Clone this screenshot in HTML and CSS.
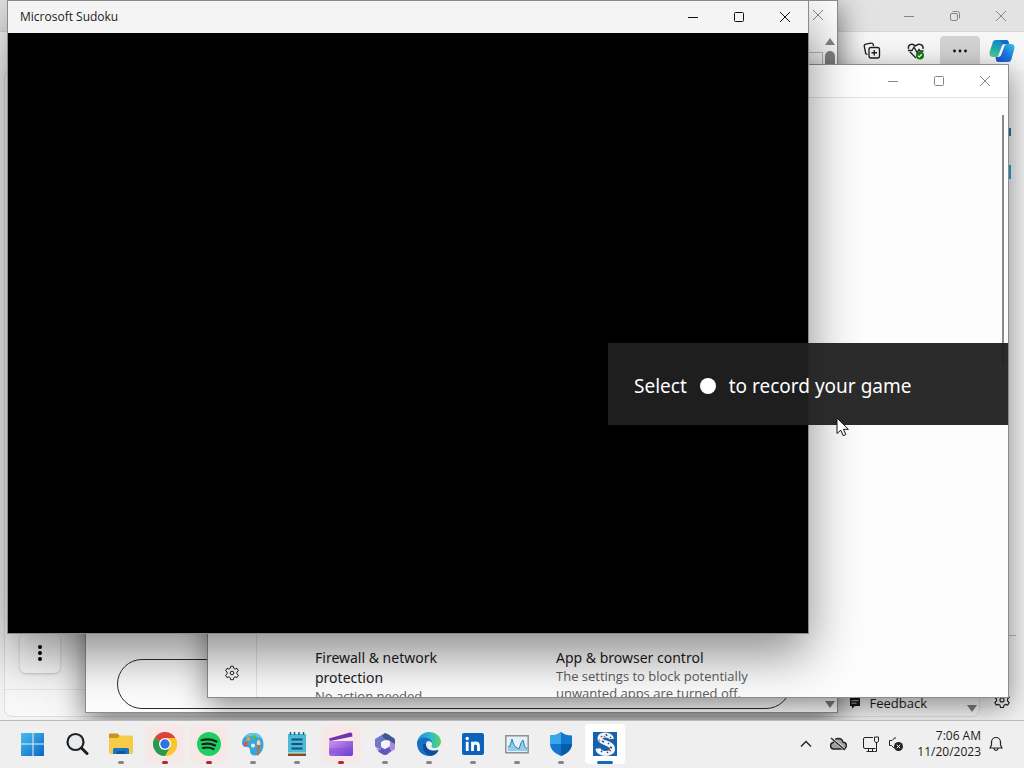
FILE: index.html
```html
<!DOCTYPE html>
<html lang="en">
<head>
<meta charset="utf-8">
<title>Desktop</title>
<link rel="stylesheet" href="styles.css">
</head>
<body>
<div class="desktop">
  <main class="workspace">

    <section class="browser" aria-label="Browser">
      <header class="browser-title">
        <button class="caption" aria-label="Minimize"><svg width="12" height="12" viewBox="0 0 12 12"><path d="M1 6.500h10"/></svg></button>
        <button class="caption" aria-label="Restore"><svg width="12" height="12" viewBox="0 0 12 12"><rect x="1.500" y="3.500" width="7" height="7" rx="1.500"/><path d="M3.500 1.500h5a2 2 0 0 1 2 2v5"/></svg></button>
        <button class="caption" aria-label="Close"><svg width="12" height="12" viewBox="0 0 12 12"><path d="M1 1l10 10M11 1L1 11"/></svg></button>
      </header>
      <div class="browser-tools">
        <button class="tool" aria-label="Collections"><svg width="20" height="20" viewBox="0 0 20 20"><path d="M5.500 13.500l-1-.4A2 2 0 0 1 3.400 11L2.300 5.500a2 2 0 0 1 1.500-2.300L9 2.200a2 2 0 0 1 2.300 1.500l.2 1.300"/><rect x="7" y="6.500" width="10.500" height="10.500" rx="2"/><path d="M12.250 9v5.500M9.500 11.750H15"/></svg></button>
        <button class="tool" aria-label="Browser essentials"><svg width="20" height="20" viewBox="0 0 20 20"><path d="M2.500 8C1.500 4 6 1.500 9.500 5 13 1.500 18 4 17 8M4 11l6 6M2 9.500h4L8 6l3 5.500 2-3 1 1.500h3.500"/><circle cx="14" cy="14.500" r="4" fill="#107c10" stroke="none"/><path d="M12.200 14.700l1.200 1.200 2.400-2.600" stroke="#fff"/></svg></button>
        <button class="tool tool-on" aria-label="Settings and more"><svg width="20" height="20" viewBox="0 0 20 20"><g fill="#111" stroke="none"><circle cx="4.500" cy="10" r="1.400"/><circle cx="10" cy="10" r="1.400"/><circle cx="15.500" cy="10" r="1.400"/></g></svg></button>
        <button class="tool tool-end" aria-label="Copilot"><svg width="26" height="26" viewBox="0 0 26 26" stroke="none">
          <defs>
            <linearGradient id="cp1" x1="0.500" y1="0" x2="0.200" y2="1"><stop offset="0" stop-color="#1583d0"/><stop offset=".5" stop-color="#1fa8b4"/><stop offset="1" stop-color="#55cf8e"/></linearGradient>
            <linearGradient id="cp2" x1="1" y1="0" x2="0" y2="1"><stop offset="0" stop-color="#3cc4ea"/><stop offset=".5" stop-color="#1877dc"/><stop offset="1" stop-color="#1b50cf"/></linearGradient>
          </defs>
          <path d="M7 2h10c2 0 2.500 1.500 3 4h-4c-2 0-3 1-3.500 3l-3 8c-.5 1.500-1 2-3 2H4c-3.500 0-4-3-3-6l2.500-8C4 3 5 2 7 2z" fill="url(#cp1)"/>
          <path d="M19 24H10c-3 0-3-2-3.500-5H9c2 0 3-1 3.500-3l3-8c.5-1.500 1-2 3-2H22c3.500 0 4 3 3 6l-2.500 9c-.5 2-1.500 3-3.500 3z" fill="url(#cp2)"/>
          <path d="M11 2h6c2 0 2.500 1.500 3 4h-4l-3-.5z" fill="#176bc4"/></svg></button>
      </div>
      <div class="browser-body">
        <div class="page">
          <button class="more-button" aria-label="More options"><svg width="6" height="18" viewBox="0 0 6 18"><circle cx="3" cy="3" r="2"/><circle cx="3" cy="9" r="2"/><circle cx="3" cy="15" r="2"/></svg></button>
          <footer class="page-foot">
            <a class="feedback" href="#feedback"><svg width="12" height="12" viewBox="0 0 12 12"><path d="M1 1h10v8H6l-3 2.500V9H1z" fill="#1b1b1b"/><path d="M2.500 3.700h7M2.500 6.200h5" stroke="#bbb"/></svg>Feedback</a>
            <span class="arrow-down page-arrow"></span>
          </footer>
        </div>
        <aside class="rail">
          <div class="rail-top">
            <svg width="18" height="16" viewBox="0 0 18 16"><circle cx="8" cy="6" r="5" fill="none" stroke="#2b88c8" stroke-width="2"/><path d="M12 4h6v8h-6z" fill="#2477a8"/></svg>
            <svg width="18" height="16" viewBox="0 0 18 16"><path d="M1 1h17v14H1z" fill="#33a3d4"/></svg>
          </div>
          <div class="rail-bottom">
            <svg width="14" height="14" viewBox="0 0 14 14"><path d="M1 2h12v9H1z" fill="#111"/></svg>
            <button class="plain" aria-label="Sidebar settings"><svg class="gear" width="18" height="18" viewBox="0 0 16 16"><path d="M6.700 1.300h2.600l.5 2 1.300.7 2-.6 1.300 2.300-1.500 1.400v1.700l1.500 1.500-1.300 2.200-2-.6-1.300.8-.5 2H6.700l-.5-2-1.300-.8-2 .6-1.300-2.200 1.500-1.500V7.100L1.600 5.700l1.300-2.300 2 .6 1.300-.7z"/><circle cx="8" cy="8" r="1.800"/></svg></button>
          </div>
        </aside>
      </div>
    </section>

    <section class="window window-form" aria-label="Form window">
      <header class="titlebar"><button class="caption caption-end" aria-label="Close"><svg width="12" height="12" viewBox="0 0 12 12"><path d="M1 1l10 10M11 1L1 11"/></svg></button></header>
      <div class="form-body">
        <div class="form-content">
          <div class="form-head"></div>
          <input class="pill" type="text" aria-label="Message">
        </div>
        <div class="scrollbar"><span class="arrow-up"></span><span class="thumb"></span><span class="arrow-down"></span></div>
      </div>
    </section>

    <section class="window window-security" aria-label="Security">
      <header class="titlebar">
        <button class="caption" aria-label="Minimize"><svg width="12" height="12" viewBox="0 0 12 12"><path d="M1 6.500h10"/></svg></button>
        <button class="caption" aria-label="Maximize"><svg width="12" height="12" viewBox="0 0 12 12"><rect x="1.500" y="1.500" width="9" height="9" rx="1"/></svg></button>
        <button class="caption" aria-label="Close"><svg width="12" height="12" viewBox="0 0 12 12"><path d="M1 1l10 10M11 1L1 11"/></svg></button>
      </header>
      <div class="security-body">
        <nav class="security-nav"><button class="plain" aria-label="Settings"><svg class="gear" width="16" height="16" viewBox="0 0 16 16"><path d="M6.700 1.300h2.600l.5 2 1.300.7 2-.6 1.300 2.300-1.500 1.400v1.700l1.500 1.500-1.300 2.200-2-.6-1.300.8-.5 2H6.700l-.5-2-1.300-.8-2 .6-1.300-2.200 1.500-1.500V7.100L1.600 5.700l1.300-2.300 2 .6 1.300-.7z"/><circle cx="8" cy="8" r="1.800"/></svg></button></nav>
        <div class="cards">
          <article class="card"><h2>Firewall &amp; network protection</h2><p>No action needed.</p></article>
          <article class="card"><h2>App &amp; browser control</h2><p>The settings to block potentially unwanted apps are turned off.</p></article>
        </div>
        <div class="thin-scroll"></div>
      </div>
    </section>

    <section class="window window-game" aria-label="Microsoft Sudoku">
      <header class="titlebar">
        <h1>Microsoft Sudoku</h1>
        <button class="caption" aria-label="Minimize"><svg width="12" height="12" viewBox="0 0 12 12"><path d="M1 6.500h10"/></svg></button>
        <button class="caption" aria-label="Maximize"><svg width="12" height="12" viewBox="0 0 12 12"><rect x="1.500" y="1.500" width="9" height="9" rx="1"/></svg></button>
        <button class="caption" aria-label="Close"><svg width="12" height="12" viewBox="0 0 12 12"><path d="M1 1l10 10M11 1L1 11"/></svg></button>
      </header>
      <div class="game-canvas"></div>
    </section>

    <div class="toast" role="status"><span>Select</span><span class="record-dot"></span><span>to record your game</span></div>

    <svg class="cursor" width="13" height="20" viewBox="0 0 13 20"><path d="M1 1v15.500l3.800-3.300 2.400 5.500 2.600-1.200-2.400-5.200h5z" fill="#fff" stroke="#111"/></svg>
  </main>

  <footer class="taskbar">
    <nav class="apps" aria-label="Apps">
      <button class="app" aria-label="Start"><svg width="24" height="24" viewBox="0 0 24 24"><defs><linearGradient id="st" x2="1" y2="1"><stop offset="0" stop-color="#48bdf0"/><stop offset="1" stop-color="#0867c5"/></linearGradient></defs><path fill="url(#st)" d="M0 1h11.500v10.500H0zM12.500 1H23v10.500H12.500zM0 12.500h11.500V24H0zM12.500 12.500H23V24H12.500z"/></svg></button>
      <button class="app" aria-label="Search"><svg width="24" height="24" viewBox="0 0 24 24"><circle cx="10.500" cy="10" r="8" fill="#e8ebee" stroke="#202020" stroke-width="2.200"/><path d="M16.500 16l5.500 5.500" stroke="#202020" stroke-width="3" stroke-linecap="round"/></svg></button>
      <button class="app open" aria-label="File Explorer"><svg width="24" height="24" viewBox="0 0 24 24"><path d="M0 2.500a1 1 0 0 1 1-1h7.500L11 4v3H0z" fill="#c9921b"/><path d="M0 6h8.500L11 3.500h12a1 1 0 0 1 1 1v16a1.500 1.500 0 0 1-1.500 1.500h-21A1.500 1.500 0 0 1 0 20.500z" fill="#f6cb45"/><path d="M4 22v-4.500A1.500 1.500 0 0 1 5.500 16h13a1.500 1.500 0 0 1 1.500 1.500V22z" fill="#1976c5"/><path d="M7.500 19h9v3h-9z" fill="#0d5aa2"/></svg></button>
      <button class="app open alert" aria-label="Chrome"><svg width="24" height="24" viewBox="0 0 24 24"><path d="M12 12L1.600 6A12 12 0 0 1 22.400 6z" fill="#dc4437"/><path d="M12 12L22.400 6A12 12 0 0 1 12 24z" fill="#fbc52d"/><path d="M12 6h10.400A12 12 0 0 1 12 24l5.200-9z" fill="#fbc52d"/><path d="M1.600 6A12 12 0 0 0 12 24l5.200-9L12 17z" fill="#279a4c"/><path d="M1.600 6L6.800 15 12 12z" fill="#279a4c"/><circle cx="12" cy="12" r="6" fill="#fff"/><circle cx="12" cy="12" r="4.700" fill="#2f74e5"/></svg></button>
      <button class="app open alert" aria-label="Spotify"><svg width="24" height="24" viewBox="0 0 24 24"><circle cx="12" cy="12" r="12" fill="#1fcf61"/><path d="M4.500 8.200c5-1.500 10.500-1 15 1.300M5.500 12.200c4.500-1.200 8.800-.7 12.500 1.200M6 16c3.700-.9 7.200-.6 10.500 1.100" fill="none" stroke="#10251a" stroke-width="2.200" stroke-linecap="round"/></svg></button>
      <button class="app open" aria-label="Paint"><svg width="24" height="24" viewBox="0 0 24 24"><path d="M12 1C5 1 1 6 1 11c0 4 3 4 5 4s3 1 3 4 2 4.500 5 4.500c5 0 8.500-5 8.500-11C22.500 5.500 18.500 1 12 1z" fill="#3aa5dd"/><path d="M12 1C8 1 5 3 3.500 5.500c5-2 12-2 18 2C20 3.500 17 1 12 1z" fill="#63c5ea"/><circle cx="4.500" cy="12" r="2.200" fill="#d35b42"/><circle cx="7.500" cy="7" r="2" fill="#e9a23a"/><circle cx="13" cy="5" r="2" fill="#65bb48"/><circle cx="12" cy="13.500" r="2" fill="#eaf3f7"/><path d="M17.500 7.500c2 2 2.500 4 1.500 6l-1 9c-.4 1.500-2 1.500-2 0l.3-9c-1-2-.6-4 1.200-6z" fill="#b87042"/><path d="M17.500 7.500c2 2 2.500 4 1.500 5.500h-2.700c-1-2-.6-4 1.200-5.500z" fill="#edd7b5"/></svg></button>
      <button class="app open" aria-label="Notepad"><svg width="24" height="24" viewBox="0 0 24 24"><path d="M3 2h18v19H3z" fill="#4db9d8"/><path d="M3 21h18v3H3z" fill="#82501e"/><path d="M3 20.500h18v1H3z" fill="#e3eef2"/><path d="M5.500 0v3M9.500 0v3M14 0v3M18.500 0v3" stroke="#17617d" stroke-width="1.500"/><path d="M6.500 7.500h11M6.500 12h11M6.500 16.500h11" stroke="#145574" stroke-width="2"/></svg></button>
      <button class="app open alert" aria-label="Clipchamp"><svg width="26" height="24" viewBox="0 0 26 24"><defs><linearGradient id="cl" x2="1" y2="1"><stop offset="0" stop-color="#cf91f1"/><stop offset="1" stop-color="#663bd0"/></linearGradient></defs><path d="M1 6.500L22 .5q1.500-.3 2 1l.5 3L2 9z" fill="#7130af"/><path d="M1 9h24v13a2 2 0 0 1-2 2H3a2 2 0 0 1-2-2z" fill="url(#cl)"/><path d="M1 16h24v5H1z" fill="#8050dc" opacity=".45"/></svg></button>
      <button class="app open" aria-label="Microsoft 365"><svg width="24" height="24" viewBox="0 0 24 24"><path d="M12 1l5 2v4l-5 2-3 3v6l-5-2a3 3 0 0 1-2-3V7z" fill="#6d79c8"/><path d="M12 1l8 4.500a3 3 0 0 1 2 2.500v8l-5-3V9l-5-2-3-3z" fill="#3f568f"/><path d="M22 12v5l-8 5.500c-2 1-4 0-5-1L3 17l6-1 3 1 5-3V9z" fill="#a48ae0"/><path d="M9 16l3 1 4-2 2 4-4 3.500q-2 .8-4 0l-5-3z" fill="#6556bd"/><path d="M12 8l4 2v4.500L12 17l-4-2.500V10z" fill="#f5f4fb"/></svg></button>
      <button class="app open" aria-label="Edge"><svg width="24" height="24" viewBox="0 0 24 24"><defs><linearGradient id="ed" x2="1"><stop offset="0" stop-color="#1b8ed6"/><stop offset=".6" stop-color="#30bdc7"/><stop offset="1" stop-color="#62d45b"/></linearGradient></defs><path d="M0 12C0 5 5.500 0 12 0s12 4.500 12 9.500c0 4-3 6.500-6.500 6.500-2 0-3.500-.8-3-2 1.500-2 0-5-3.500-5-5 0-7 5-5 9z" fill="url(#ed)"/><path d="M0 11c1-4 5-6 10-5 3 .5 5 3 5 5-2-3-6-2.500-6 1.500 0 4 4 7.500 12 5.500-2 4-5.500 6-9 6C5.500 24 0 19 0 11z" fill="#1670c4"/><path d="M6 12c-1 6 3 11 8.500 11.800C19 23 21 20 21.500 18 13 21 8.500 16.500 9 12z" fill="#0d4e98"/></svg></button>
      <button class="app open" aria-label="LinkedIn"><svg width="24" height="24" viewBox="0 0 24 24"><rect x="1" y="1" width="22" height="22" rx="2" fill="#0b63bd"/><circle cx="6.200" cy="6.500" r="1.700" fill="#fff"/><path d="M6.200 9.700V19M11.500 9.700V19M11.500 14c0-4 6-4 6 0v5" fill="none" stroke="#fff" stroke-width="2.800"/></svg></button>
      <button class="app open" aria-label="Task Manager"><svg width="24" height="24" viewBox="0 0 24 24"><path d="M.8 3.800h22.400v17H.8z" fill="#e6f1f7" stroke="#8c9297" stroke-width="1.500"/><path d="M3 19v-4l2-1 2-7 1.500 5 2 3 3.500 2 2-6 2-3 1.500 6 2.500 3v2z" fill="#90cde9"/><path d="M3 15l2-1 2-7 1.500 5 2 3 3.500 2 2-6 2-3 1.500 6 2.500 3" fill="none" stroke="#2785b7"/></svg></button>
      <button class="app open" aria-label="Windows Security"><svg width="24" height="24" viewBox="0 0 24 24"><path d="M12 0c3 2.500 6.500 3.500 11 3.500V11c0 6-4 10-11 13C5 21 1 17 1 11V3.500C5.500 3.500 9 2.500 12 0z" fill="#1277cf"/><path d="M12 0v12H1V3.500C5.500 3.500 9 2.500 12 0z" fill="#38a8e8"/><path d="M12 12h11c-.3 5-4 9.500-11 12z" fill="#075baa"/></svg></button>
      <button class="app open active" aria-label="Microsoft Sudoku"><svg width="24" height="24" viewBox="0 0 24 24"><path d="M0 0h24v24H0z" fill="#1762ae"/><path d="M18.500 7c-.5-5-11.500-5.500-11.500-.5 0 5 12.500 4 12.500 10.500 0 6-14 6-14.500-.5" fill="none" stroke="#f4f7fb" stroke-width="5"/><path d="M8 4l1 1M13 2l1 2M17 5l1 1M9 9l2 1M15 11l1 1M17 15l2 1M14 20l1 1M8 19l1 1" stroke="#35496b" stroke-width="1.500"/><path d="M11 4l1 1M16 18l2 1M6 8l1 1" stroke="#c0614c" stroke-width="1.500"/></svg></button>
    </nav>
    <div class="tray">
      <button class="plain tray-item" aria-label="Show hidden icons"><svg width="12" height="8" viewBox="0 0 12 8"><path d="M1 6.500l5-5 5 5" stroke-width="1.400"/></svg></button>
      <button class="plain tray-item" aria-label="OneDrive"><svg width="18" height="16" viewBox="0 0 18 16"><path d="M4.500 13a3.300 3.300 0 0 1-.3-6.500C5 3.500 7.500 2.500 9.500 2.500c2.300 0 4 1.400 4.500 3.800A3.300 3.300 0 0 1 14 13z" fill="#a0a0a0" stroke-width="1.400"/><path d="M3 2.500l12 10.500" stroke="#efefef" stroke-width="2.600"/><path d="M2 2l14 12" stroke-width="1.400"/></svg></button>
      <button class="plain tray-pair" aria-label="Network and volume">
        <svg width="18" height="18" viewBox="0 0 18 18"><path d="M11 2.500H3a1.500 1.500 0 0 0-1.500 1.500v8A1.500 1.500 0 0 0 3 13.500h10.500M4.500 16.500h8M6.500 13.500v3M10.500 13.500v3M14.500 7.500v9h-2M12.500 2h4v4l-1 1.500h-2l-1-1.500z"/></svg>
        <svg width="16" height="16" viewBox="0 0 16 16"><path d="M7 3V1.500L4 4.500H1.500v5h2L6 12"/><circle cx="10.500" cy="10.500" r="4.500" fill="#222" stroke="none"/><path d="M8.800 8.800l3.400 3.400M12.200 8.800l-3.400 3.400" stroke="#fff"/></svg>
      </button>
      <button class="plain clock"><time datetime="2023-11-20T07:06">7:06 AM<br>11/20/2023</time></button>
      <button class="plain" aria-label="Notifications"><svg width="14" height="16" viewBox="0 0 14 16"><path d="M1 12l1.500-3V6a4.500 4.500 0 0 1 9 0v3l1.500 3zM5 12.500c.3 2.500 3.700 2.500 4 0" stroke-width="1.200"/></svg></button>
    </div>
  </footer>
</div>
</body>
</html>
```

FILE: styles.css
```css
* { box-sizing: border-box; }

body {
  margin: 0;
  font-family: "Open Sans", "Noto Sans", sans-serif;
  font-size: 12px;
  color: #1b1b1b;
}

h1, h2, p { margin: 0; font-weight: 400; }

button {
  display: flex;
  align-items: center;
  justify-content: center;
  padding: 0;
  border: 0;
  background: none;
  color: inherit;
  font: inherit;
}

svg { display: block; flex: none; }

.desktop {
  display: flex;
  flex-direction: column;
  height: 100vh;
  overflow: hidden;
}

.workspace {
  position: relative;
  flex: 1;
  min-height: 0;
  overflow: hidden;
}

/* Window frames */
.window {
  position: absolute;
  display: flex;
  flex-direction: column;
  border: 1px solid #8c8c8c;
  background: #fdfdfd;
}

.titlebar {
  display: flex;
  flex: none;
  align-items: stretch;
  justify-content: flex-end;
  height: 32px;
}

.caption {
  width: 46px;
  fill: none;
  stroke: #868686;
}

/* Browser behind the other windows */
.browser {
  display: flex;
  flex-direction: column;
  height: 100%;
  background: #f3f3f3;
}

.browser-title {
  display: flex;
  flex: none;
  justify-content: flex-end;
  height: 32px;
  border-bottom: 1px solid #d6d6d6;
  background: #e3e3e3;
}

.browser-tools {
  display: flex;
  flex: none;
  align-items: center;
  justify-content: flex-end;
  height: 38px;
  background: #f7f7f7;
}

.tool {
  width: 44px;
  height: 30px;
  fill: none;
  stroke: #1f1f1f;
  stroke-width: 1.3;
}

.tool-on {
  width: 40px;
  margin: 0 2px;
  border-radius: 4px;
  background: #d3d3d3;
}

.tool-end { width: 42px; padding-right: 2px; }

.browser-body { display: flex; flex: 1; min-height: 0; }

.page {
  display: flex;
  flex: 1;
  flex-direction: column;
  align-items: flex-start;
  justify-content: flex-end;
  margin: 0 0 3px 4px;
  border: 1px solid #dedede;
  border-radius: 8px;
  background: #f8f8f8;
}

.more-button {
  width: 40px;
  height: 40px;
  margin: 0 0 16px 15px;
  border-radius: 6px;
  background: #fdfdfd;
  box-shadow: 0 1px 3px rgba(0, 0, 0, .2);
}

.page-foot {
  display: flex;
  align-items: center;
  align-self: stretch;
  justify-content: flex-end;
  gap: 40px;
  height: 27px;
  padding-right: 2px;
  border-top: 1px solid #e6e6e6;
}

.feedback {
  display: flex;
  align-items: center;
  gap: 9px;
  color: #1b1b1b;
  font-size: 13px;
  text-decoration: none;
}

.arrow-down, .arrow-up {
  flex: none;
  border: 5px solid transparent;
}

.arrow-down { border-top: 7px solid #7b7b7b; border-bottom: 0; }
.arrow-up { border-top: 0; border-bottom: 7px solid #868686; }
.page-arrow { margin-top: 10px; }

.rail {
  display: flex;
  flex-direction: column;
  justify-content: space-between;
  align-items: center;
  width: 44px;
  padding: 54px 0 11px;
}

.rail-top { display: flex; flex-direction: column; gap: 24px; }

.rail-bottom {
  display: flex;
  flex-direction: column;
  align-items: center;
  gap: 26px;
  width: 28px;
  padding-top: 15px;
  border-top: 1px solid #b5b5b5;
}

.gear { fill: none; stroke: #222; stroke-width: 1; }

/* Form window */
.window-form {
  top: 0;
  right: 186px;
  bottom: 7px;
  left: 85px;
  box-shadow: 0 8px 28px rgba(0, 0, 0, .55);
}

.caption-end { width: 38px; padding-bottom: 4px; }
.form-body { display: flex; flex: 1; min-height: 0; }

.form-content {
  display: flex;
  flex: 1;
  flex-direction: column;
  justify-content: space-between;
  min-width: 0;
}

.form-head {
  height: 40px;
  margin-top: 19px;
  border: 1px solid #bcbcbc;
  border-left: 0;
}

.pill {
  height: 50px;
  margin: 0 32px 3px 31px;
  padding: 0 24px;
  border: 1px solid #2c2c2c;
  border-radius: 25px;
  background: transparent;
}

.scrollbar {
  display: flex;
  flex-direction: column;
  align-items: center;
  width: 14px;
  padding: 5px 0 4px;
}

.thumb {
  width: 10px;
  height: 120px;
  margin: 6px 0 auto;
  border-radius: 5px;
  background: #858585;
}

/* Security window */
.window-security {
  top: 64px;
  right: 15px;
  bottom: 22px;
  left: 207px;
  box-shadow: 0 8px 28px rgba(0, 0, 0, .45);
}

.window-security .titlebar {
  height: 33px;
  border-bottom: 1px solid #e2e2e2;
  background: #fff;
}

.security-body {
  display: flex;
  flex: 1;
  min-height: 0;
  overflow: hidden;
}

.security-nav {
  display: flex;
  align-items: flex-end;
  justify-content: center;
  width: 49px;
  padding-bottom: 16px;
  border-right: 1px solid #e4e4e4;
}

.cards {
  display: grid;
  flex: 1;
  grid-template-columns: 187px 205px;
  gap: 54px;
  min-width: 0;
  padding: 550px 0 0 58px;
}

.card h2 {
  max-width: 140px;
  font-family: "Noto Sans", sans-serif;
  font-size: 14px;
  line-height: 20px;
}

.card + .card h2 { max-width: none; }
.card p { color: #5c5c5c; font-size: 13px; line-height: 17px; }

.thin-scroll {
  width: 2px;
  height: 250px;
  margin: 17px 4px 0 0;
  background: #8a8a8a;
}

/* Game window */
.window-game {
  top: 0;
  right: 215px;
  bottom: 86px;
  left: 7px;
  border-color: #8a8a8a;
  box-shadow: 0 20px 48px rgba(0, 0, 0, .45);
}

.window-game .titlebar { background: #f4f4f4; }
.window-game .caption { stroke: #111; }

.window-game h1 {
  flex: 1;
  align-self: center;
  padding-left: 12px;
  font-size: 12px;
  line-height: 16px;
}

.game-canvas { flex: 1; background: #000; }

/* Recording prompt */
.toast {
  position: absolute;
  top: 343px;
  right: 16px;
  display: flex;
  align-items: center;
  gap: 13px;
  width: 400px;
  height: 82px;
  padding: 3px 0 0 26px;
  background: rgba(32, 32, 32, .95);
  color: #fff;
  font-family: "Noto Sans", sans-serif;
  font-size: 19px;
  white-space: nowrap;
}

.record-dot {
  width: 16px;
  height: 16px;
  border-radius: 50%;
  background: #fff;
}

.cursor { position: absolute; top: 417px; left: 836px; }

/* Taskbar */
.taskbar {
  display: flex;
  flex: none;
  align-items: stretch;
  justify-content: space-between;
  height: 48px;
  padding: 0 21px 0 11px;
  border-top: 1px solid #b9b9b9;
  background: #efefef;
}

.apps { display: flex; align-items: center; padding-bottom: 2px; }

.app {
  position: relative;
  width: 40px;
  height: 40px;
  margin: 0 2px;
  border-radius: 4px;
}

.alert { background: radial-gradient(#fbe4e2, #f3ebea); }
.active { background: #fff; }

.open::after {
  content: "";
  position: absolute;
  bottom: 0;
  left: 50%;
  width: 6px;
  height: 3px;
  border-radius: 2px;
  background: #858585;
  transform: translateX(-50%);
}

.alert::after { background: #b3262b; }
.active::after { width: 16px; background: #1469bd; }

.tray { display: flex; align-items: center; padding-bottom: 2px; }
.tray svg { fill: none; stroke: #222; }
.tray-item { width: 32px; height: 40px; }
.tray-pair { gap: 8px; width: 58px; height: 40px; }

.clock {
  justify-content: flex-end;
  min-width: 64px;
  margin: 0 8px 0 5px;
  font-size: 12px;
  line-height: 16px;
  text-align: right;
}
```
